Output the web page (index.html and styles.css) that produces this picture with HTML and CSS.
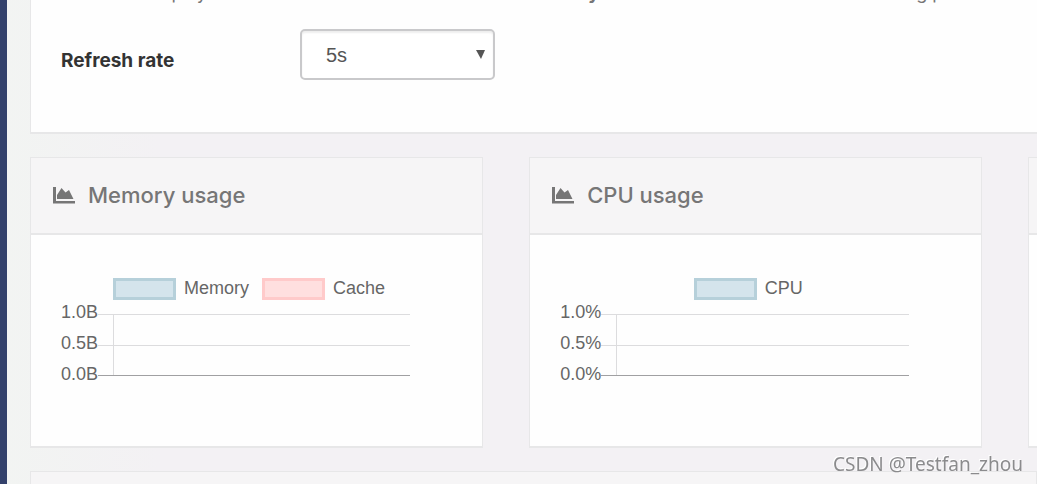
FILE: index.html
```html
<!DOCTYPE html>
<html lang="en">
<head>
    <meta charset="UTF-8">
    <meta name="viewport" content="width=device-width, initial-scale=1.0">
    <title>Container statistics</title>
    <link rel="stylesheet" href="styles.css">
</head>
<body>

<div class="sidebar"></div>

<main class="content">

    <!-- Settings -->
    <section class="card settings">
        <p class="intro">This view displays real-time statistics about the container <b>testy-mock-1</b> as well as a list of the running processes</p>
        <form class="settings-row">
            <label for="refresh-rate">Refresh rate</label>
            <div class="select-box">
                <select id="refresh-rate" name="refresh-rate">
                    <option>5s</option>
                    <option>10s</option>
                    <option>30s</option>
                    <option>60s</option>
                </select>
                <svg class="arrow" width="10" height="10" viewBox="0 0 10 10"><path d="M0 0h9L5 9z"/></svg>
            </div>
        </form>
    </section>

    <!-- Charts -->
    <div class="charts">
        <section class="card chart-card">
            <h2 class="card-header">
                <svg class="icon" width="22" height="18" viewBox="0 0 22 18"><path d="M0 1h3v14h19v2.500H0zM4 13V9l4.500-7 4 4.500L16 4l4.500 9z"/></svg>
                Memory usage
            </h2>
            <div class="card-body">
                <div class="legend">
                    <span class="swatch blue"></span><span class="legend-text">Memory</span>
                    <span class="swatch red"></span><span class="legend-text">Cache</span>
                </div>
                <div class="chart">
                    <div class="axis"><span>1.0B</span><span>0.5B</span><span>0.0B</span></div>
                    <svg class="plot" height="64">
                        <path class="grid" d="M0 .5H2000M0 31.5H2000M15.5 0V62"/>
                        <path class="zero" d="M0 61.5H2000"/>
                    </svg>
                </div>
            </div>
        </section>

        <section class="card chart-card">
            <h2 class="card-header">
                <svg class="icon" width="22" height="18" viewBox="0 0 22 18"><path d="M0 1h3v14h19v2.500H0zM4 13V9l4.500-7 4 4.500L16 4l4.500 9z"/></svg>
                CPU usage
            </h2>
            <div class="card-body">
                <div class="legend">
                    <span class="swatch blue"></span><span class="legend-text">CPU</span>
                </div>
                <div class="chart">
                    <div class="axis"><span>1.0%</span><span>0.5%</span><span>0.0%</span></div>
                    <svg class="plot" height="64">
                        <path class="grid" d="M0 .5H2000M0 31.5H2000M15.5 0V62"/>
                        <path class="zero" d="M0 61.5H2000"/>
                    </svg>
                </div>
            </div>
        </section>

        <section class="card chart-card">
            <div class="card-header"></div>
            <div class="card-body"></div>
        </section>
    </div>

    <section class="card">
        <div class="card-header"></div>
    </section>

</main>

<div class="watermark">CSDN @Testfan_zhou</div>

</body>
</html>
```
FILE: styles.css
```css
* {
    box-sizing: border-box;
}

body {
    display: flex;
    height: 100vh;
    margin: 0;
    overflow: hidden;
    font-family: Inter, "Noto Sans", sans-serif;
    color: #767676;
    background: linear-gradient(to right, #f2f4f2, #f3f1f4 160px);
}

.sidebar {
    flex: 0 0 7px;
    background: #33416b;
}

.content {
    flex: 1;
    min-width: 0;
    padding-left: 23px;
    overflow: hidden;
}

.card {
    margin-bottom: 23px;
    background: #fefefe;
    border: 1px solid #e7e7e8;
    border-bottom-width: 2px;
}

.card-header {
    display: flex;
    align-items: center;
    gap: 13px;
    height: 77px;
    margin: 0;
    padding: 0 22px 2px;
    font-size: 22px;
    font-weight: 500;
    background: #f6f5f6;
    border-bottom: 2px solid #e7e7e8;
}

.icon {
    fill: #767676;
}

/* Settings */
.settings {
    padding: 0 30px 52px;
    border-top: 0;
    border-right: 0;
}

.intro {
    margin: -19px 0 24px;
    font-size: 18px;
    line-height: 24px;
    white-space: nowrap;
}

.settings-row {
    display: grid;
    grid-template-columns: 239px 195px;
}

.settings-row label {
    padding-top: 20px;
    font-size: 19px;
    line-height: 24px;
    font-weight: 700;
    color: #333;
}

.select-box {
    position: relative;
}

.select-box select {
    width: 100%;
    height: 51px;
    padding: 0 24px;
    font-family: "Liberation Sans", Arial, sans-serif;
    font-size: 20px;
    color: #555;
    background: #fff;
    border: 2px solid #c9c9cb;
    border-radius: 5px;
    box-shadow: inset 0 2px 2px rgba(0, 0, 0, 0.07);
    appearance: none;
}

.arrow {
    position: absolute;
    top: 21px;
    right: 9px;
    fill: #555;
    pointer-events: none;
}

/* Charts */
.charts {
    display: flex;
    gap: 46px;
}

.chart-card {
    flex: 0 0 45%;
}

.card-body {
    padding: 43px 45px 56px 30px;
    font-family: "Liberation Sans", Arial, sans-serif;
    font-size: 18px;
    color: #666;
}

.legend {
    display: flex;
    justify-content: center;
    height: 22px;
    line-height: 20px;
}

.swatch {
    width: 63px;
    margin-right: 8px;
    border: 3px solid;
}

.legend-text + .swatch {
    margin-left: 13px;
}

.blue {
    background: #d4e4ec;
    border-color: #b6d0da;
}

.red {
    background: #ffdfdf;
    border-color: #ffcaca;
}

.chart {
    display: flex;
    align-items: flex-start;
    height: 90px;
    padding-right: 27px;
}

.axis {
    display: flex;
    flex-direction: column;
    margin-top: -3px;
    line-height: 31px;
}

.plot {
    flex: 1;
    min-width: 0;
    margin-top: 14px;
    fill: none;
    stroke-width: 1;
}

.grid {
    stroke: #dcdcde;
}

.zero {
    stroke: #a0a0a2;
}

.watermark {
    position: fixed;
    right: 14px;
    bottom: 8px;
    font-family: "Noto Sans", sans-serif;
    font-size: 19px;
    line-height: 24px;
    color: #8b8b8d;
    text-shadow: -1px -1px 0 #fff;
}
```
